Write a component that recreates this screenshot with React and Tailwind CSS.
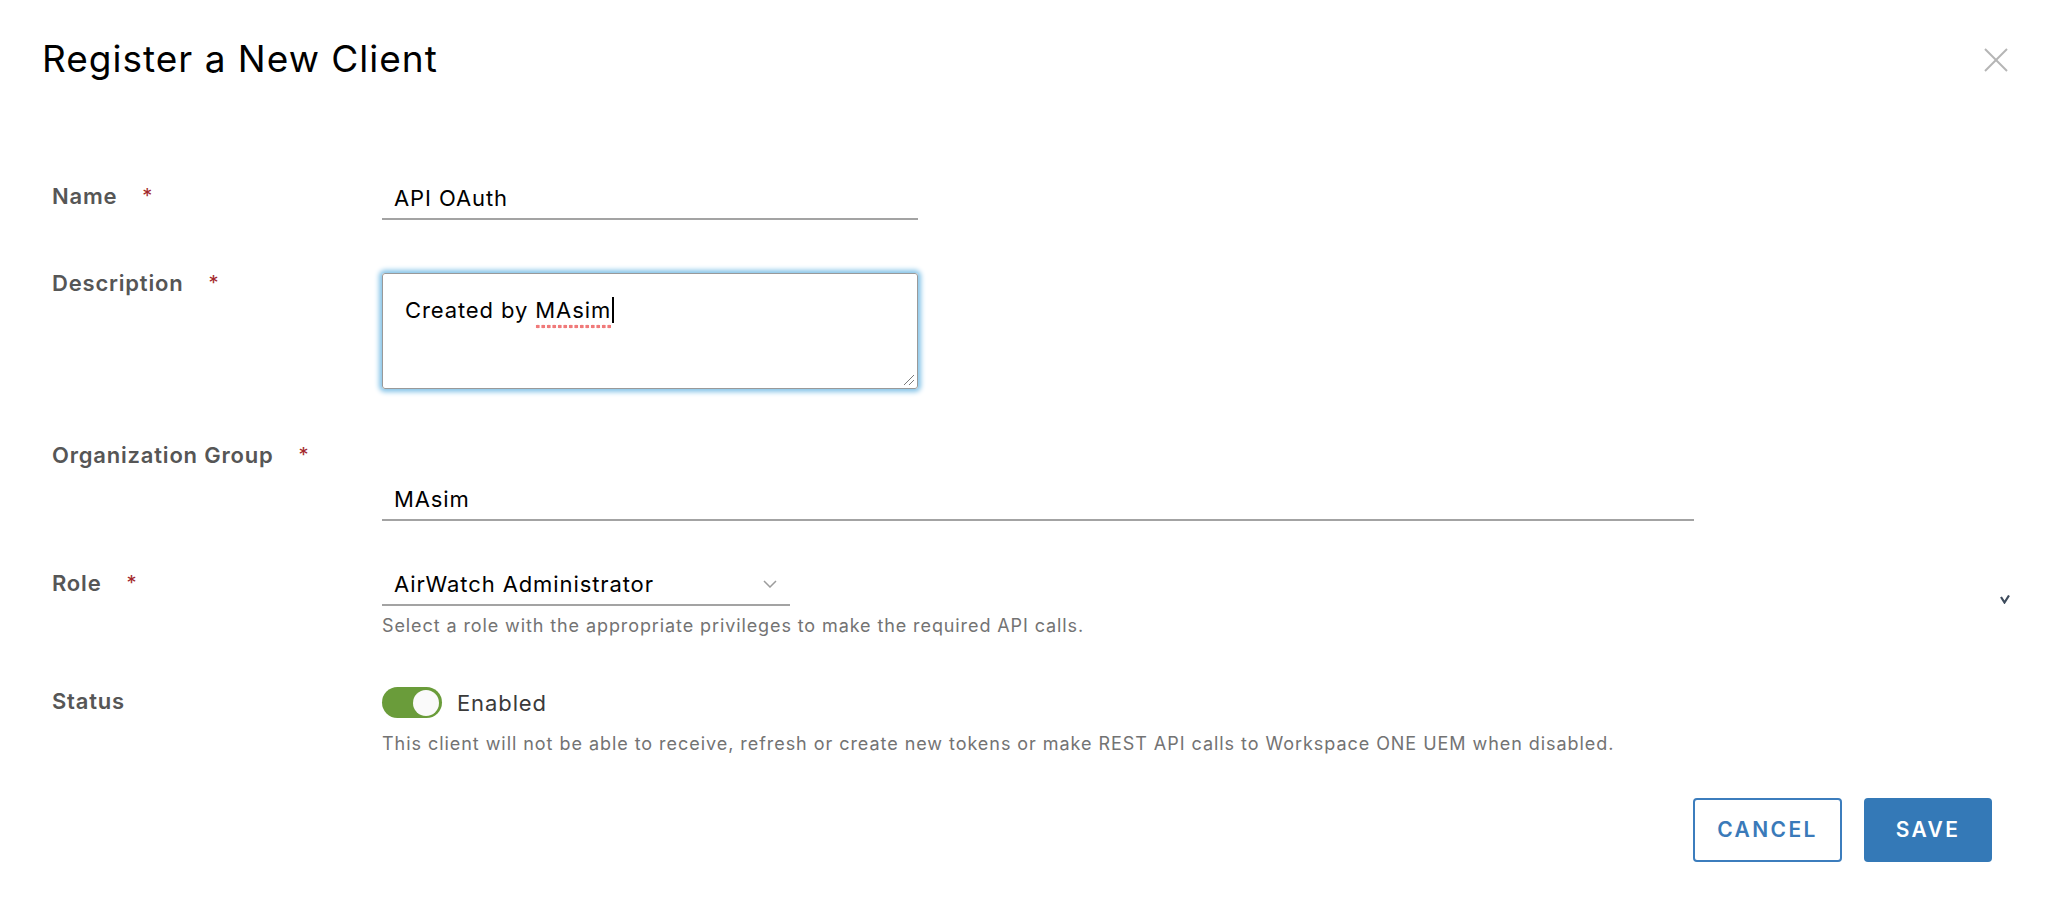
import React from "react";

function Label({ text, required, className = "" }) {
  return (
    <div className={"flex items-start " + className}>
      <span className="text-[22px] leading-[22px] font-semibold tracking-[0.8px] text-[#565656]">{text}</span>
      {required && (
        <span className="ml-[25px] text-[20px] leading-[22px] text-[#a3282a]">*</span>
      )}
    </div>
  );
}

export default function App() {
  return (
    <div className="relative w-[2048px] h-[915px] overflow-hidden bg-white font-['Inter',sans-serif] text-black">
      {/* Header */}
      <div className="flex items-start justify-between pl-[42px] pr-[40px] pt-[40px]">
        <h1 className="text-[37px] leading-[37px] font-normal tracking-[1px] text-black">Register a New Client</h1>
        <button className="mt-[8px]" aria-label="Close">
          <svg width="24" height="24" viewBox="0 0 24 24">
            <line x1="1" y1="1" x2="23" y2="23" stroke="#b5b5b5" strokeWidth="2" />
            <line x1="23" y1="1" x2="1" y2="23" stroke="#b5b5b5" strokeWidth="2" />
          </svg>
        </button>
      </div>

      {/* Form */}
      <div className="pl-[52px]">
        {/* Name */}
        <div className="flex mt-[107px]">
          <div className="w-[330px]">
            <Label text="Name" required className="mt-[1px]" />
          </div>
          <div className="w-[536px] border-b-2 border-[#a3a3a3] pl-[12px] pb-[6px] text-[22px] leading-[28px] tracking-[0.9px]">
            API OAuth
          </div>
        </div>

        {/* Description */}
        <div className="flex mt-[52px]">
          <div className="w-[330px]">
            <Label text="Description" required />
          </div>
          <div className="relative mt-[1px] w-[536px] h-[116px] rounded-[3px] border border-[#999999] shadow-[0_0_5px_3px_#86c4e8] pl-[22px] pt-[22px] text-[22px] leading-[28px] tracking-[0.9px]">
            <span>Created by </span>
            <span className="relative">
              MAsim
              <span className="absolute left-0 right-0 bottom-[-6px] h-[5px] bg-[radial-gradient(circle,#f07a7a_1.7px,transparent_2.1px)] bg-[length:5.5px_5px]"></span>
            </span>
            <span className="inline-block align-[-5px] ml-[1px] w-[1.5px] h-[26px] bg-black"></span>
            <svg className="absolute right-[2px] bottom-[2px]" width="12" height="12" viewBox="0 0 12 12">
              <line x1="11" y1="1" x2="1" y2="11" stroke="#7a7a7a" strokeWidth="1" />
              <line x1="11" y1="6" x2="6" y2="11" stroke="#7a7a7a" strokeWidth="1" />
            </svg>
          </div>
        </div>

        {/* Organization Group */}
        <div className="flex mt-[55px]">
          <div className="w-[330px]">
            <Label text="Organization Group" required />
          </div>
          <div className="mt-[41px] w-[1312px] border-b-2 border-[#a3a3a3] pl-[12px] pb-[6px] text-[22px] leading-[28px] tracking-[0.9px]">
            MAsim
          </div>
        </div>

        {/* Role */}
        <div className="flex mt-[49px]">
          <div className="w-[330px]">
            <Label text="Role" required className="mt-[2px]" />
          </div>
          <div className="flex flex-col">
            <div className="w-[408px] flex items-center justify-between border-b-2 border-[#a3a3a3] pl-[12px] pr-[13px] pb-[6px] text-[22px] leading-[28px] tracking-[0.9px]">
              <span>AirWatch Administrator</span>
              <svg width="14" height="8" viewBox="0 0 14 8">
                <polyline points="1,1 7,7 13,1" fill="none" stroke="#9c9c9c" strokeWidth="1.5" />
              </svg>
            </div>
            <div className="mt-[10px] text-[18px] leading-[20px] tracking-[0.9px] text-[#737373]">
              Select a role with the appropriate privileges to make the required API calls.
            </div>
          </div>
        </div>

        {/* Status */}
        <div className="flex mt-[51px]">
          <div className="w-[330px]">
            <Label text="Status" className="mt-[3px]" />
          </div>
          <div className="flex flex-col">
            <div className="flex items-center gap-[15px]">
              <div className="w-[60px] h-[31px] rounded-full bg-[#6a9c3a] flex items-center justify-end pr-[3px]">
                <div className="w-[26px] h-[26px] rounded-full bg-[#fafafa]"></div>
              </div>
              <span className="text-[22px] leading-[28px] tracking-[0.9px] text-[#3a3a3a]">Enabled</span>
            </div>
            <div className="mt-[16px] text-[18px] leading-[20px] tracking-[0.95px] text-[#737373]">
              This client will not be able to receive, refresh or create new tokens or make REST API calls to Workspace ONE UEM when disabled.
            </div>
          </div>
        </div>
      </div>

      {/* Buttons */}
      <div className="flex justify-end gap-[22px] pr-[56px] mt-[44px]">
        <button className="w-[149px] h-[64px] rounded-[4px] border-2 border-[#3c7dbd] bg-white text-[#3a7ab9] text-[21px] font-semibold tracking-[2.4px] flex items-center justify-center">
          CANCEL
        </button>
        <button className="w-[128px] h-[64px] rounded-[4px] bg-[#3479b7] text-white text-[21px] font-semibold tracking-[2.4px] flex items-center justify-center">
          SAVE
        </button>
      </div>

      {/* stray small chevron at right edge */}
      <svg className="absolute left-[2000px] top-[595px]" width="10" height="9" viewBox="0 0 10 9">
        <polyline points="1,2 4.5,7.5 9,0.5" fill="none" stroke="#3d4b5c" strokeWidth="2.2" />
      </svg>
    </div>
  );
}
